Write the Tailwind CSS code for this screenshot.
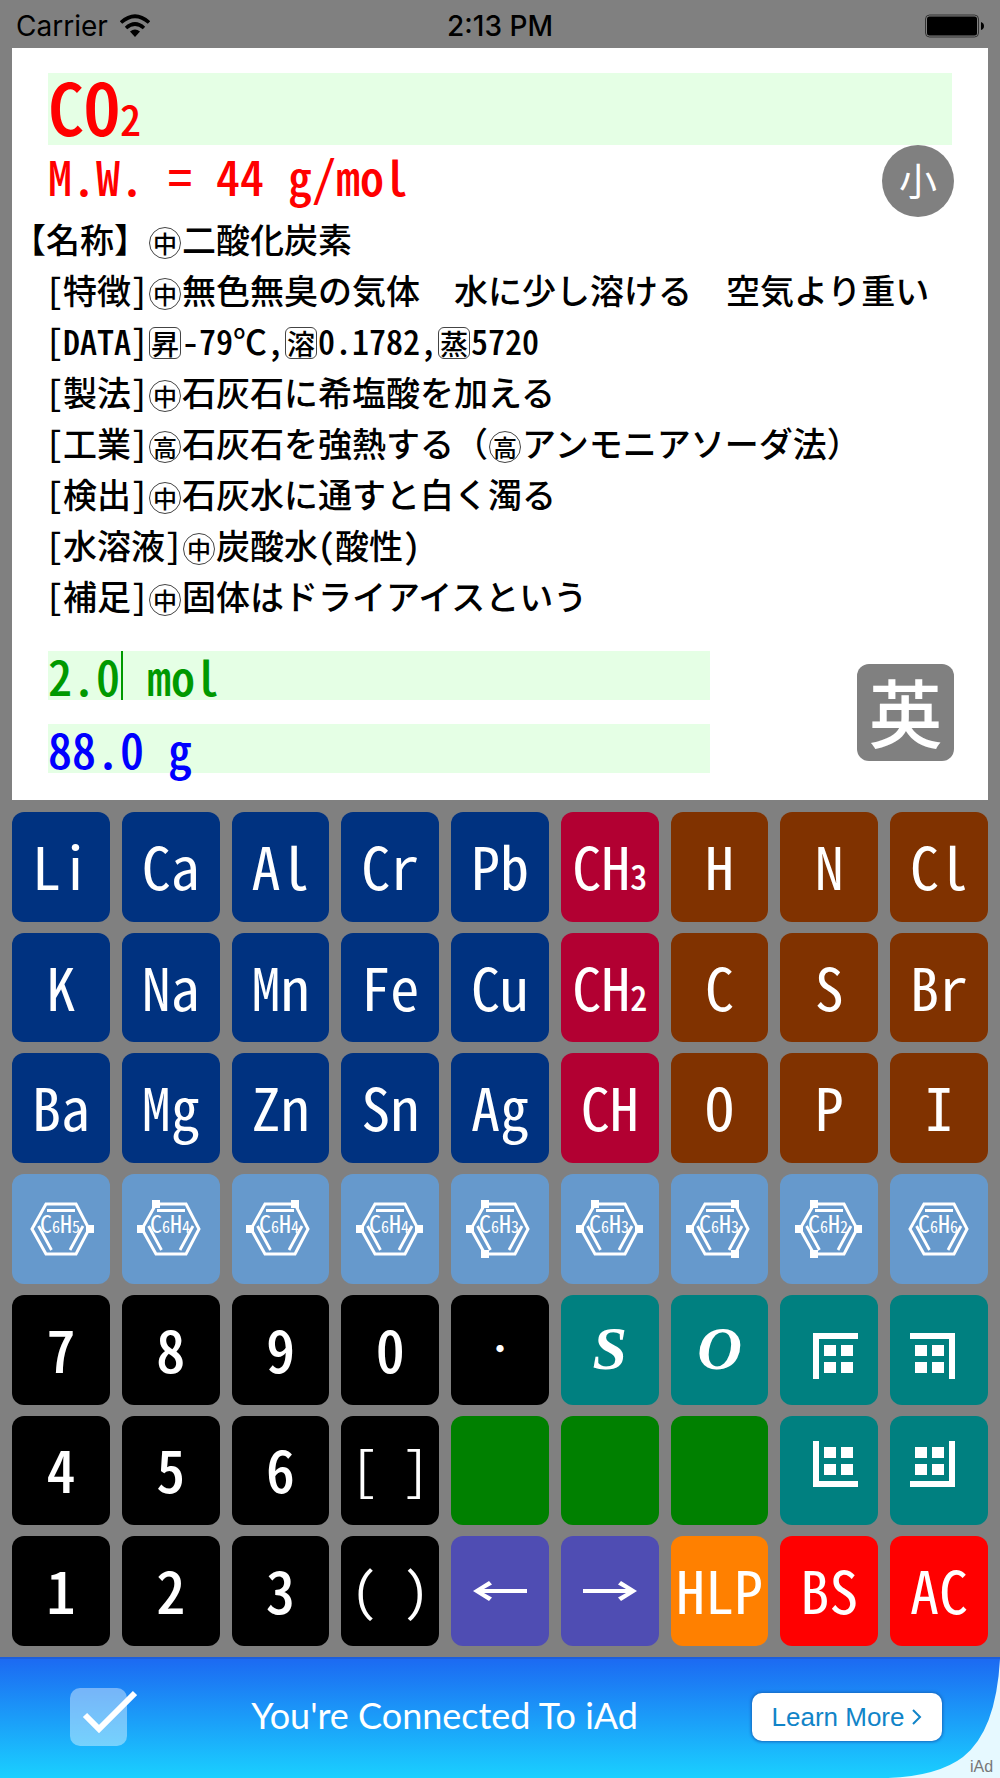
<!DOCTYPE html>
<html lang="ja">
<head>
    <meta charset="UTF-8">
    <meta name="viewport" content="width=device-width, initial-scale=1.0">
    <title>分子量電卓</title>
    <script src="https://cdn.jsdelivr.net/npm/@tailwindcss/browser@4"></script>
</head>
<body class="flex min-h-screen flex-col bg-[#808080] font-['Noto_Sans_CJK_JP',sans-serif] [font-feature-settings:'hwid']">

    <!-- アイコン部品 -->
    <svg class="hidden">
        <symbol id="ring" viewBox="0 0 72 64">
            <g fill="none" stroke="white" stroke-width="3">
                <path d="M7 32 21 7H51L64 32 51 57H21Z" />
                <path d="M22 13.500H50M13.500 29 26.500 53M58 29 45 53" stroke-width="2.800" />
            </g>
        </symbol>
        <symbol id="corner" viewBox="0 0 58 58">
            <path fill="white" d="M13 12H58V18H19V58H13ZM24 24h12v11h-12zM41 24h12v11h-12zM24 41h12v11h-12zM41 41h12v11h-12z" />
        </symbol>
    </svg>

    <!-- ステータスバー -->
    <header class="grid h-12 grid-cols-3 items-center px-4 pt-1 font-['Inter',sans-serif] text-[28px] leading-8 text-black [font-feature-settings:normal]">
        <div class="flex items-center gap-3">
            <span>Carrier</span>
            <svg class="h-6 w-[30px]" viewBox="0 0 30 24">
                <g fill="none" stroke="black" stroke-width="3.600">
                    <path d="M1 8.500Q15-4 29 8.500" />
                    <path d="M6 14Q15 6 24 14" />
                </g>
                <path d="M10 17.500Q15 13.500 20 17.500L15 23Z" />
            </svg>
        </div>
        <div class="text-center font-medium">2:13 PM</div>
        <svg class="h-6 w-[60px] justify-self-end" viewBox="0 0 60 24">
            <rect x="1.500" y="1" width="53" height="22" rx="4" fill="none" stroke="#333" />
            <rect x="3" y="2.500" width="50" height="19" rx="2.500" />
            <path d="M57 8q3 1 3 4t-3 4z" />
        </svg>
    </header>

    <!-- 表示パネル -->
    <main class="mx-3 bg-white pb-[27px] pt-[25px]">
        <div class="mx-9 flex h-18 items-baseline bg-[#e5ffe5] text-[72px] font-medium leading-[64px] text-[#ff0000]">
            <span>CO</span><span class="text-[42px]">2</span>
        </div>
        <div class="flex h-18 items-center justify-between pl-9 pr-[34px]">
            <p class="pb-3 text-[48px] font-medium leading-[60px] text-[#ff0000]">M.W.&nbsp;=&nbsp;44&nbsp;g/mol</p>
            <button class="size-18 rounded-full bg-[#808080] pb-1 text-[38px] leading-none text-white">小</button>
        </div>

        <div class="mb-[30px] text-[34px] font-medium leading-[51px] text-black">
            <p class="-mt-1">【名称】<span class="mx-px inline-flex size-8 items-center justify-center rounded-full border border-[#444] text-[24px] leading-none">中</span>二酸化炭素</p>
            <p class="pl-[34px]">[特徴]<span class="mx-px inline-flex size-8 items-center justify-center rounded-full border border-[#444] text-[24px] leading-none">中</span>無色無臭の気体<span class="[font-feature-settings:normal]">　</span>水に少し溶ける<span class="[font-feature-settings:normal]">　</span>空気より重い</p>
            <p class="pl-[34px]">[DATA]<span class="mx-px inline-flex size-8 items-center justify-center rounded-md border border-[#444] text-[28px] leading-none">昇</span>-79℃,<span class="mx-px inline-flex size-8 items-center justify-center rounded-md border border-[#444] text-[28px] leading-none">溶</span>0.1782,<span class="mx-px inline-flex size-8 items-center justify-center rounded-md border border-[#444] text-[28px] leading-none">蒸</span>5720</p>
            <p class="pl-[34px]">[製法]<span class="mx-px inline-flex size-8 items-center justify-center rounded-full border border-[#444] text-[24px] leading-none">中</span>石灰石に希塩酸を加える</p>
            <p class="pl-[34px]">[工業]<span class="mx-px inline-flex size-8 items-center justify-center rounded-full border border-[#444] text-[24px] leading-none">高</span>石灰石を強熱する<span class="[font-feature-settings:normal]">（</span><span class="mx-px inline-flex size-8 items-center justify-center rounded-full border border-[#444] text-[24px] leading-none">高</span>アンモニアソーダ法<span class="[font-feature-settings:normal]">）</span></p>
            <p class="pl-[34px]">[検出]<span class="mx-px inline-flex size-8 items-center justify-center rounded-full border border-[#444] text-[24px] leading-none">中</span>石灰水に通すと白く濁る</p>
            <p class="pl-[34px]">[水溶液]<span class="mx-px inline-flex size-8 items-center justify-center rounded-full border border-[#444] text-[24px] leading-none">中</span>炭酸水(酸性)</p>
            <p class="pl-[34px]">[補足]<span class="mx-px inline-flex size-8 items-center justify-center rounded-full border border-[#444] text-[24px] leading-none">中</span>固体はドライアイスという</p>
        </div>

        <div class="flex items-center justify-between pl-9 pr-[34px]">
            <div class="flex w-3/4 max-w-[662px] flex-col gap-6 text-[48px] font-medium leading-[49px]">
                <div class="flex h-[49px] bg-[#e5ffe5] text-[#009900]">
                    <input id="mol" type="text" value="2.0" class="h-[49px] w-[75px] border-r-2 border-[#009900] p-0 outline-none">
                    <label for="mol" class="pl-6">mol</label>
                </div>
                <div class="flex h-[49px] bg-[#e5ffe5] text-[#0000ff]">
                    <input id="gram" type="text" value="88.0" class="h-[49px] w-24 p-0 outline-none">
                    <label for="gram" class="pl-6">g</label>
                </div>
            </div>
            <button class="size-[97px] rounded-xl bg-[#808080] pb-1 text-[74px] font-medium leading-none text-white">英</button>
        </div>
    </main>

    <!-- キーパッド -->
    <section class="grid flex-1 grid-cols-9 grid-rows-7 gap-x-3 gap-y-[11px] px-3 pb-[11px] pt-3 text-[58px] leading-none text-white [&>button:not(.flex)]:pb-1">
        <button class="rounded-xl bg-[#003280]">Li</button>
        <button class="rounded-xl bg-[#003280]">Ca</button>
        <button class="rounded-xl bg-[#003280]">Al</button>
        <button class="rounded-xl bg-[#003280]">Cr</button>
        <button class="rounded-xl bg-[#003280]">Pb</button>
        <button class="rounded-xl bg-[#b20032]">CH<span class="text-[34px] font-medium">3</span></button>
        <button class="rounded-xl bg-[#803200]">H</button>
        <button class="rounded-xl bg-[#803200]">N</button>
        <button class="rounded-xl bg-[#803200]">Cl</button>

        <button class="rounded-xl bg-[#003280]">K</button>
        <button class="rounded-xl bg-[#003280]">Na</button>
        <button class="rounded-xl bg-[#003280]">Mn</button>
        <button class="rounded-xl bg-[#003280]">Fe</button>
        <button class="rounded-xl bg-[#003280]">Cu</button>
        <button class="rounded-xl bg-[#b20032]">CH<span class="text-[34px] font-medium">2</span></button>
        <button class="rounded-xl bg-[#803200]">C</button>
        <button class="rounded-xl bg-[#803200]">S</button>
        <button class="rounded-xl bg-[#803200]">Br</button>

        <button class="rounded-xl bg-[#003280]">Ba</button>
        <button class="rounded-xl bg-[#003280]">Mg</button>
        <button class="rounded-xl bg-[#003280]">Zn</button>
        <button class="rounded-xl bg-[#003280]">Sn</button>
        <button class="rounded-xl bg-[#003280]">Ag</button>
        <button class="rounded-xl bg-[#b20032]">CH</button>
        <button class="rounded-xl bg-[#803200]">O</button>
        <button class="rounded-xl bg-[#803200]">P</button>
        <button class="rounded-xl bg-[#803200]">I</button>

        <!-- ベンゼン環 -->
        <button class="flex items-center justify-center rounded-xl bg-[#6699cc]">
            <svg class="h-16 w-18 fill-white" viewBox="0 0 72 64">
                <use href="#ring" />
                <path d="M61 28h8v8h-8z" />
                <text x="15" y="36" font-size="24">C<tspan font-size="16">6</tspan>H<tspan font-size="16">5</tspan></text>
            </svg>
        </button>
        <button class="flex items-center justify-center rounded-xl bg-[#6699cc]">
            <svg class="h-16 w-18 fill-white" viewBox="0 0 72 64">
                <use href="#ring" />
                <path d="M2 28h8v8h-8zM17 3h8v8h-8z" />
                <text x="15" y="36" font-size="24">C<tspan font-size="16">6</tspan>H<tspan font-size="16">4</tspan></text>
            </svg>
        </button>
        <button class="flex items-center justify-center rounded-xl bg-[#6699cc]">
            <svg class="h-16 w-18 fill-white" viewBox="0 0 72 64">
                <use href="#ring" />
                <path d="M2 28h8v8h-8zM47 3h8v8h-8z" />
                <text x="15" y="36" font-size="24">C<tspan font-size="16">6</tspan>H<tspan font-size="16">4</tspan></text>
            </svg>
        </button>
        <button class="flex items-center justify-center rounded-xl bg-[#6699cc]">
            <svg class="h-16 w-18 fill-white" viewBox="0 0 72 64">
                <use href="#ring" />
                <path d="M2 28h8v8h-8zM61 28h8v8h-8z" />
                <text x="15" y="36" font-size="24">C<tspan font-size="16">6</tspan>H<tspan font-size="16">4</tspan></text>
            </svg>
        </button>
        <button class="flex items-center justify-center rounded-xl bg-[#6699cc]">
            <svg class="h-16 w-18 fill-white" viewBox="0 0 72 64">
                <use href="#ring" />
                <path d="M2 28h8v8h-8zM17 3h8v8h-8zM17 53h8v8h-8z" />
                <text x="15" y="36" font-size="24">C<tspan font-size="16">6</tspan>H<tspan font-size="16">3</tspan></text>
            </svg>
        </button>
        <button class="flex items-center justify-center rounded-xl bg-[#6699cc]">
            <svg class="h-16 w-18 fill-white" viewBox="0 0 72 64">
                <use href="#ring" />
                <path d="M2 28h8v8h-8zM17 3h8v8h-8zM61 28h8v8h-8z" />
                <text x="15" y="36" font-size="24">C<tspan font-size="16">6</tspan>H<tspan font-size="16">3</tspan></text>
            </svg>
        </button>
        <button class="flex items-center justify-center rounded-xl bg-[#6699cc]">
            <svg class="h-16 w-18 fill-white" viewBox="0 0 72 64">
                <use href="#ring" />
                <path d="M2 28h8v8h-8zM47 3h8v8h-8zM47 53h8v8h-8z" />
                <text x="15" y="36" font-size="24">C<tspan font-size="16">6</tspan>H<tspan font-size="16">3</tspan></text>
            </svg>
        </button>
        <button class="flex items-center justify-center rounded-xl bg-[#6699cc]">
            <svg class="h-16 w-18 fill-white" viewBox="0 0 72 64">
                <use href="#ring" />
                <path d="M2 28h8v8h-8zM17 3h8v8h-8zM17 53h8v8h-8zM61 28h8v8h-8z" />
                <text x="15" y="36" font-size="24">C<tspan font-size="16">6</tspan>H<tspan font-size="16">2</tspan></text>
            </svg>
        </button>
        <button class="flex items-center justify-center rounded-xl bg-[#6699cc]">
            <svg class="h-16 w-18 fill-white" viewBox="0 0 72 64">
                <use href="#ring" />
                <text x="15" y="36" font-size="24">C<tspan font-size="16">6</tspan>H<tspan font-size="16">6</tspan></text>
            </svg>
        </button>

        <button class="rounded-xl bg-black font-medium">7</button>
        <button class="rounded-xl bg-black font-medium">8</button>
        <button class="rounded-xl bg-black font-medium">9</button>
        <button class="rounded-xl bg-black font-medium">0</button>
        <button class="rounded-xl bg-black text-[34px]">・</button>
        <button class="rounded-xl bg-[#008080] font-['Liberation_Serif',serif] text-[62px] font-bold italic">S</button>
        <button class="rounded-xl bg-[#008080] font-['Liberation_Serif',serif] text-[62px] font-bold italic">O</button>
        <button class="flex items-center justify-center rounded-xl bg-[#008080]" aria-label="左上">
            <svg class="size-[58px]" viewBox="0 0 58 58"><use href="#corner" /></svg>
        </button>
        <button class="flex items-center justify-center rounded-xl bg-[#008080]" aria-label="右上">
            <svg class="size-[58px] -scale-x-100" viewBox="0 0 58 58"><use href="#corner" /></svg>
        </button>

        <button class="rounded-xl bg-black font-medium">4</button>
        <button class="rounded-xl bg-black font-medium">5</button>
        <button class="rounded-xl bg-black font-medium">6</button>
        <button class="rounded-xl bg-black text-[52px]">[ ]</button>
        <button class="rounded-xl bg-[#008000]" aria-label="空き1"></button>
        <button class="rounded-xl bg-[#008000]" aria-label="空き2"></button>
        <button class="rounded-xl bg-[#008000]" aria-label="空き3"></button>
        <button class="flex items-center justify-center rounded-xl bg-[#008080]" aria-label="左下">
            <svg class="size-[58px] -scale-y-100" viewBox="0 0 58 58"><use href="#corner" /></svg>
        </button>
        <button class="flex items-center justify-center rounded-xl bg-[#008080]" aria-label="右下">
            <svg class="size-[58px] rotate-180" viewBox="0 0 58 58"><use href="#corner" /></svg>
        </button>

        <button class="rounded-xl bg-black font-medium">1</button>
        <button class="rounded-xl bg-black font-medium">2</button>
        <button class="rounded-xl bg-black font-medium">3</button>
        <button class="rounded-xl bg-black text-[52px]">( )</button>
        <button class="flex items-center justify-center rounded-xl bg-[#4f4db3]" aria-label="左へ">
            <svg class="h-5 w-[54px] fill-white" viewBox="0 0 54 20"><path d="M0 10 16 0 19 3.500 11 8H54V12H11L19 16.500 16 20Z" /></svg>
        </button>
        <button class="flex items-center justify-center rounded-xl bg-[#4f4db3]" aria-label="右へ">
            <svg class="h-5 w-[54px] -scale-x-100 fill-white" viewBox="0 0 54 20"><path d="M0 10 16 0 19 3.500 11 8H54V12H11L19 16.500 16 20Z" /></svg>
        </button>
        <button class="rounded-xl bg-[#ff8000]">HLP</button>
        <button class="rounded-xl bg-[#ff0000]">BS</button>
        <button class="rounded-xl bg-[#ff0000]">AC</button>
    </section>

    <!-- 広告バナー -->
    <footer class="relative flex h-[121px] items-center justify-between border-t-2 border-[#1d5fdc] bg-linear-to-b/srgb from-[#1c6af2] to-[#1ad0ff] pb-1 pl-[70px] pr-[58px] [font-feature-settings:normal]">
        <svg class="h-[58px] w-[67px]" viewBox="0 0 67 58">
            <rect width="57" height="58" rx="10" fill="white" fill-opacity=".4" />
            <path d="M15 27 29 41 65 5" fill="none" stroke="white" stroke-width="6" />
        </svg>
        <p class="pb-1 font-['Lato',sans-serif] text-[36px] leading-10 text-white">You're Connected To iAd</p>
        <a href="#" class="flex h-12 w-[190px] items-center justify-center gap-2 rounded-[10px] bg-white font-['Liberation_Sans',sans-serif] text-[26px] leading-8 text-[#1184c8] shadow-[0_0_3px_1px_#1669c0]">
            Learn More
            <svg class="h-4 w-[10px]" viewBox="0 0 10 16"><path d="M1 1 8 8 1 15" fill="none" stroke="#1184c8" stroke-width="2" /></svg>
        </a>
        <svg class="absolute bottom-0 right-0 h-[119px] w-28" viewBox="0 0 112 119">
            <path d="M112 0V119H0Q50 117 75 98Q108 72 112 0Z" fill="#e6f9ff" />
            <text x="82" y="113" font-size="16" fill="#777" class="font-['Liberation_Sans',sans-serif]">iAd</text>
        </svg>
    </footer>
</body>
</html>
